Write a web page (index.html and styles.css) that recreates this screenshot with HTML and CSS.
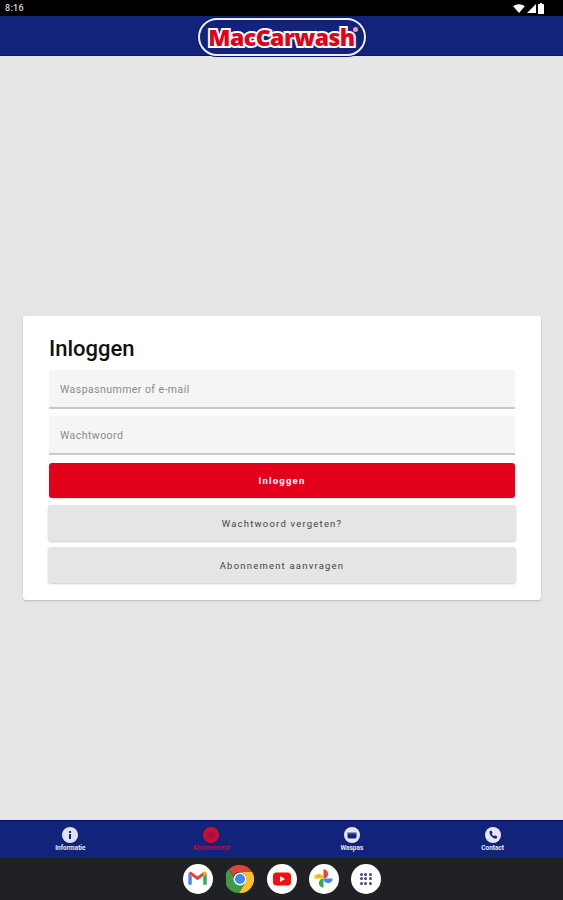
FILE: index.html
```html
<!DOCTYPE html>
<html lang="nl">

<head>
  <meta charset="UTF-8">
  <meta name="viewport" content="width=device-width, initial-scale=1.0">
  <title>MacCarwash - Inloggen</title>
  <link rel="stylesheet" href="styles.css">
</head>

<body>
  <div class="status-bar">
    <span class="time">8:16</span>
    <div class="status-icons">
      <svg width="12" height="9" viewBox="0 0 13 10"><path d="M0 2.500C3.500-.6 9.500-.6 13 2.500L6.500 10z" fill="#fff"/></svg>
      <svg width="9" height="9" viewBox="0 0 10 10"><path d="M10 0v10H0z" fill="#fff"/></svg>
      <svg width="6" height="11" viewBox="0 0 6 11"><path d="M2 0h2v1h1.500q.5 0 .5.500v9q0 .5-.5.500H.5q-.5 0-.5-.5v-9Q0 1 .5 1H2z" fill="#fff"/></svg>
    </div>
  </div>

  <header class="top-bar">
    <div class="logo"><span class="logo-text">MacCarwash</span><span class="logo-reg"></span></div>
  </header>

  <main class="content">
    <section class="card">
      <h1>Inloggen</h1>
      <div class="field">Waspasnummer of e-mail</div>
      <div class="field">Wachtwoord</div>
      <button class="btn btn-red">Inloggen</button>
      <button class="btn btn-grey">Wachtwoord vergeten?</button>
      <button class="btn btn-grey">Abonnement aanvragen</button>
    </section>
  </main>

  <nav class="bottom-nav">
    <div class="nav-item">
      <svg class="nav-icon" viewBox="0 0 16 16"><circle cx="8" cy="8" r="8" fill="#dfe1f0"/><rect x="7" y="7" width="2" height="5" fill="#12237c"/><rect x="7" y="4" width="2" height="2" fill="#12237c"/></svg>
      <span>Informatie</span>
    </div>
    <div class="nav-item active">
      <svg class="nav-icon" viewBox="0 0 16 16"><circle cx="8" cy="8" r="8" fill="#c8102e"/><rect x="4" y="5" width="8" height="6" rx="1" fill="#a80f40"/></svg>
      <span>Abonnement</span>
    </div>
    <div class="nav-item">
      <svg class="nav-icon" viewBox="0 0 16 16"><circle cx="8" cy="8" r="8" fill="#e6e7f2"/><rect x="3.500" y="5" width="9" height="6.500" rx="1.500" fill="#12237c"/><rect x="3.500" y="5" width="9" height="1.500" fill="#8f96c4"/></svg>
      <span>Waspas</span>
    </div>
    <div class="nav-item">
      <svg class="nav-icon" viewBox="0 0 16 16"><circle cx="8" cy="8" r="8" fill="#e6e7f2"/><path d="M4.500 4.200l2-.7 1.100 2.400-1 .9c.5 1.100 1.300 1.900 2.400 2.500l1-1 2.300 1.200-.7 2c-3.800.3-7.400-3.500-7.100-7.300z" fill="#12237c"/></svg>
      <span>Contact</span>
    </div>
  </nav>

  <div class="dock">
    <div class="app">
      <svg viewBox="0 0 20 20" width="23" height="23">
        <path d="M2 5.500v10h3V8z" fill="#4285f4"/>
        <path d="M18 5.500v10h-3V8z" fill="#34a853"/>
        <path d="M2 5.500L10 11.500l8-6-2.200-1.500L10 8.300 4.200 4z" fill="#ea4335"/>
        <path d="M15 8l3-2.500V4.800L15.800 4 15 5z" fill="#fbbc04"/>
      </svg>
    </div>
    <div class="app app-chrome">
      <svg viewBox="0 0 28 28" width="28" height="28">
        <path d="M14 0a14 14 0 0 1 12.100 7H14a7 7 0 0 0-6.500 4.400L3 3.900A14 14 0 0 1 14 0z" fill="#db4437"/>
        <path d="M26.100 7A14 14 0 0 1 13 28l6-10.500A7 7 0 0 0 19 9.500 7 7 0 0 0 14 7z" fill="#fbc02d"/>
        <path d="M3 3.900l6 10.500a7 7 0 0 0 10 3.100L13 28A14 14 0 0 1 3 3.900z" fill="#3f9c45"/>
        <circle cx="14" cy="14" r="6.500" fill="#fff"/>
        <circle cx="14" cy="14" r="5" fill="#4285f4"/>
      </svg>
    </div>
    <div class="app">
      <svg viewBox="0 0 20 20" width="20" height="20">
        <rect x="1" y="3.500" width="18" height="13" rx="3.500" fill="#f40f0f"/>
        <path d="M8 7l5 3-5 3z" fill="#fff"/>
      </svg>
    </div>
    <div class="app">
      <svg viewBox="0 0 20 20" width="23" height="23">
        <path d="M10 10V2a4 4 0 0 1 0 8z" fill="#ea4335"/>
        <path d="M10 10h8a4 4 0 0 1-8 0z" fill="#4285f4"/>
        <path d="M10 10v8a4 4 0 0 1 0-8z" fill="#34a853"/>
        <path d="M10 10H2a4 4 0 0 1 8 0z" fill="#fbbc04"/>
      </svg>
    </div>
    <div class="app">
      <div class="dots">
        <i></i><i></i><i></i><i></i><i></i><i></i><i></i><i></i><i></i>
      </div>
    </div>
  </div>
</body>

</html>
```

FILE: styles.css
```css
* {
  margin: 0;
  padding: 0;
  box-sizing: border-box;
}

html,
body {
  height: 100%;
}

body {
  display: flex;
  flex-direction: column;
  font-family: Roboto, "Liberation Sans", sans-serif;
  background: #e6e6e6;
}

/* android status bar */
.status-bar {
  height: 16px;
  flex: none;
  background: #000;
  color: #d8d8d8;
  display: flex;
  align-items: center;
  justify-content: space-between;
  padding: 0 19px 0 5px;
}

.time {
  font-size: 9px;
  font-weight: 500;
  letter-spacing: 0.3px;
}

.status-icons {
  display: flex;
  align-items: center;
  gap: 2px;
}

/* header */
.top-bar {
  height: 40px;
  flex: none;
  background: #12237c;
  border-bottom: 1px solid #0a1670;
  display: flex;
  justify-content: center;
}

.logo {
  width: 168px;
  height: 38px;
  margin-top: 2px;
  border: 2px solid #eef0f8;
  border-radius: 19px;
  background: #12237c;
  display: flex;
  align-items: center;
  justify-content: center;
  box-shadow: 0 0 0 1px #0a1670;
  position: relative;
}

.logo-text {
  font-family: "Open Sans", "Liberation Sans", sans-serif;
  font-weight: 800;
  font-size: 23px;
  letter-spacing: -0.5px;
  color: #e30018;
  -webkit-text-stroke: 4px #fff;
  paint-order: stroke fill;
}

.logo-reg {
  width: 5px;
  height: 5px;
  border-radius: 50%;
  background: #e8a0a8;
  position: absolute;
  top: 7px;
  right: 6px;
}

/* main area */
.content {
  flex: 1;
  display: flex;
  align-items: center;
  justify-content: center;
  padding: 40px 22px 0 23px;
}

.card {
  width: 518px;
  height: 284px;
  background: #fff;
  border-radius: 3px;
  box-shadow: 0 1px 2px rgba(0, 0, 0, 0.2);
  padding: 20px 26px 0;
  display: flex;
  flex-direction: column;
}

.card h1 {
  font-size: 22px;
  font-weight: 500;
  line-height: 26px;
  color: #111;
  margin-bottom: 8px;
}

.field {
  height: 39px;
  flex: none;
  background: #f5f5f5;
  border-bottom: 2px solid #c9c9c9;
  border-radius: 3px 3px 0 0;
  font-size: 10.5px;
  letter-spacing: 0.45px;
  color: #8a8a8a;
  display: flex;
  align-items: center;
  padding: 2px 0 0 11px;
  margin-bottom: 7px;
}

.btn {
  height: 36px;
  flex: none;
  border: 0;
  border-radius: 3px;
  font-family: inherit;
  font-size: 9.5px;
  letter-spacing: 1.2px;
}

.btn-red {
  height: 35px;
  background: #e2001a;
  color: #fff;
  font-weight: 700;
  margin: 1px 0 7px;
  box-shadow: 0 1px 1px rgba(0, 0, 0, 0.15);
}

.btn-grey {
  background: #e5e5e5;
  color: #444;
  font-weight: 400;
  margin: 0 -1px 6px;
  box-shadow: 0 1px 2px rgba(0, 0, 0, 0.2);
}

/* bottom tabs */
.bottom-nav {
  height: 38px;
  flex: none;
  background: #12237c;
  border-top: 1px solid #060f70;
  display: flex;
  padding: 6px 0 0;
}

.nav-item {
  flex: 1;
  display: flex;
  flex-direction: column;
  align-items: center;
  gap: 1px;
  color: #e6e7f2;
  font-size: 6.5px;
  font-weight: 700;
}

.nav-item.active {
  color: #b0103f;
}

.nav-icon {
  width: 16px;
  height: 16px;
}

/* android dock */
.dock {
  height: 42px;
  flex: none;
  background: #202124;
  display: flex;
  justify-content: center;
  align-items: center;
  gap: 12px;
  padding-bottom: 1px;
}

.app {
  width: 30px;
  height: 30px;
  border-radius: 50%;
  background: #fff;
  display: flex;
  align-items: center;
  justify-content: center;
}

.app-chrome {
  background: transparent;
}

.dots {
  display: grid;
  grid-template-columns: repeat(3, 3px);
  gap: 1.5px;
}

.dots i {
  width: 3px;
  height: 3px;
  border-radius: 50%;
  background: #3f4a8a;
}
```
